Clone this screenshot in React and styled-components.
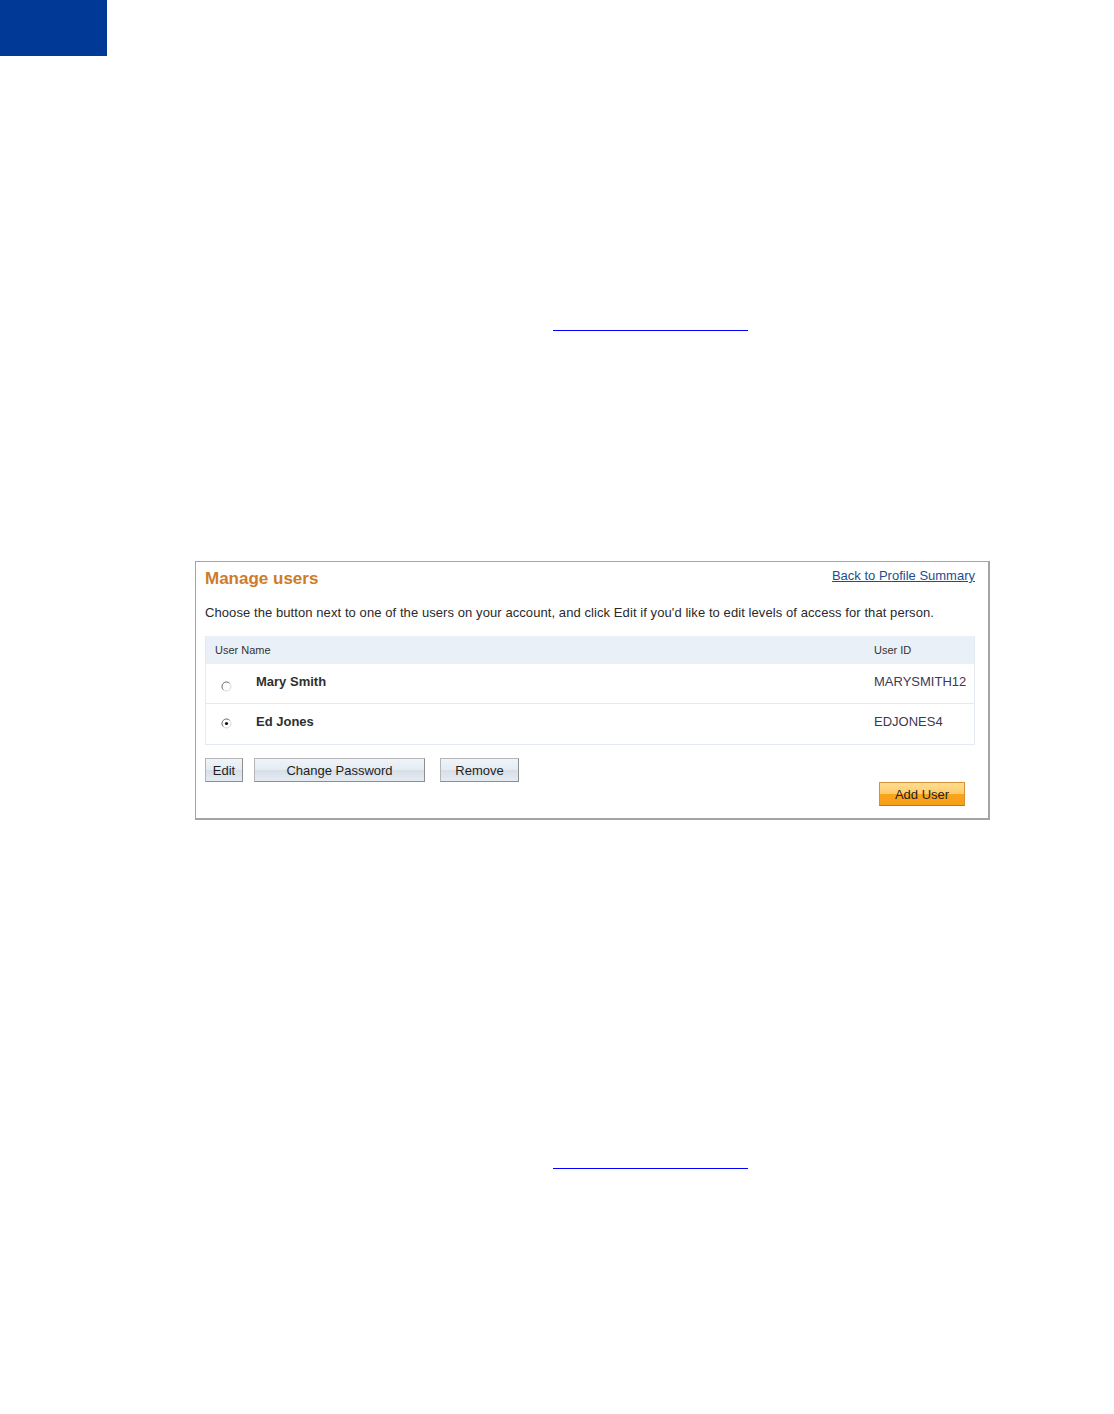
import styled, { createGlobalStyle } from "styled-components";

const GlobalStyle = createGlobalStyle`
  body {
    margin: 0;
    background: #ffffff;
    font-family: "Liberation Sans", Arial, sans-serif;
  }
`;

const Page = styled.div`
  width: 1114px;
  height: 1414px;
  display: flex;
  flex-direction: column;
  align-items: flex-start;
`;

const Corner = styled.div`
  width: 107px;
  height: 56px;
  background: #003a96;
`;

const LinkRule = styled.div`
  margin-top: ${(p) => p.top}px;
  margin-left: 553px;
  width: 195px;
  height: 1px;
  background: #0000ff;
`;

const Panel = styled.div`
  margin-top: 230px;
  margin-left: 195px;
  width: 795px;
  height: 259px;
  box-sizing: border-box;
  border: 1px solid #a4a4a4;
  border-right: 2px solid #a4a4a4;
  border-bottom: 2px solid #a4a4a4;
  padding: 6px 13px 0 9px;
  display: flex;
  flex-direction: column;
`;

const HeadRow = styled.div`
  display: flex;
  justify-content: space-between;
  align-items: flex-start;
`;

const Title = styled.h1`
  margin: 1px 0 0;
  font-size: 17px;
  font-weight: bold;
  color: #cd7c2a;
`;

const BackLink = styled.a`
  font-size: 13px;
  color: #1c4f8f;
  text-decoration: underline;
  cursor: pointer;
`;

const Intro = styled.p`
  margin: 16px 0 0;
  font-size: 13px;
  color: #2a2a2a;
  letter-spacing: 0.08px;
`;

const Table = styled.div`
  margin-top: 16px;
  border: 1px solid #e3eaf2;
  border-top: none;
  display: flex;
  flex-direction: column;
`;

const HeaderRow = styled.div`
  height: 28px;
  background: #e9f0f7;
  display: grid;
  grid-template-columns: 1fr 100px;
  align-items: center;
  padding-left: 9px;
  font-size: 11px;
  color: #333;
`;

const Row = styled.div`
  height: ${(p) => p.h}px;
  display: grid;
  grid-template-columns: 50px 1fr 100px;
  align-items: start;
  border-bottom: ${(p) => (p.last ? "none" : "1px solid #e3eaf2")};
  padding-top: 10px;
  box-sizing: border-box;
`;

const RadioCell = styled.div`
  padding: ${(p) => p.dy}px 0 0 15px;
`;

const UserName = styled.span`
  font-size: 13px;
  font-weight: bold;
  color: #2f2f2f;
`;

const UserId = styled.span`
  font-size: 13px;
  color: #3e3852;
`;

const Actions = styled.div`
  margin-top: 13px;
  display: flex;
  align-items: flex-start;
`;

const Button = styled.button`
  height: 24px;
  width: ${(p) => p.w}px;
  margin-right: ${(p) => p.gap}px;
  padding: 0;
  font-family: inherit;
  font-size: 13px;
  color: #1f1f1f;
  border: 1px solid #b5b5b5;
  border-right-color: #8d8d8d;
  border-bottom-color: #8d8d8d;
  background: linear-gradient(#f0f4f9 0%, #e4ebf3 49%, #d8dee6 50%, #e4ebf3 100%);
  cursor: pointer;
`;

const AddWrap = styled.div`
  margin-left: auto;
  margin-right: 10px;
  padding-top: 24px;
`;

const AddButton = styled.button`
  height: 24px;
  width: 86px;
  padding: 0;
  font-family: inherit;
  font-size: 13px;
  color: #222;
  border: 1px solid #d39236;
  border-bottom-color: #b67820;
  background: linear-gradient(#ffdc93 0%, #ffcc66 50%, #f9a41c 52%, #f7a01a 100%);
  cursor: pointer;
`;

const Radio = ({ checked }) => (
  <svg width="11" height="11" viewBox="0 0 11 11">
    <circle cx="5.5" cy="5.5" r="4.5" fill="#fff" stroke="#d8d8d8" />
    <path d="M2.3 8.7 A4.5 4.5 0 0 1 8.7 2.3" fill="none" stroke="#7a7a7a" strokeWidth="1" />
    {checked && <circle cx="5.5" cy="5.5" r="1.6" fill="#111" />}
  </svg>
);

const users = [
  { name: "Mary Smith", id: "MARYSMITH12", h: 40, dy: 4 },
  { name: "Ed Jones", id: "EDJONES4", h: 40, dy: 1, checked: true, last: true },
];

export default function App() {
  return (
    <>
      <GlobalStyle />
      <Page>
        <Corner />
        <LinkRule top={274} />
        <Panel>
          <HeadRow>
            <Title>Manage users</Title>
            <BackLink>Back to Profile Summary</BackLink>
          </HeadRow>
          <Intro>
            Choose the button next to one of the users on your account, and click Edit if you'd like to edit levels of access for that person.
          </Intro>
          <Table>
            <HeaderRow>
              <span>User Name</span>
              <span>User ID</span>
            </HeaderRow>
            {users.map((u) => (
              <Row key={u.id} h={u.h} last={u.last}>
                <RadioCell dy={u.dy}>
                  <Radio checked={u.checked} />
                </RadioCell>
                <UserName>{u.name}</UserName>
                <UserId>{u.id}</UserId>
              </Row>
            ))}
          </Table>
          <Actions>
            <Button w={38} gap={11}>Edit</Button>
            <Button w={171} gap={15}>Change Password</Button>
            <Button w={79} gap={0}>Remove</Button>
            <AddWrap>
              <AddButton>Add User</AddButton>
            </AddWrap>
          </Actions>
        </Panel>
        <LinkRule top={348} />
      </Page>
    </>
  );
}
